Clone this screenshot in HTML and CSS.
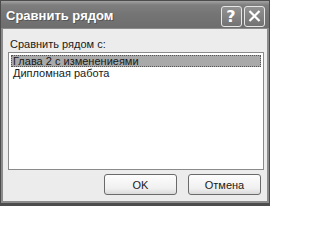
FILE: index.html
```html
<!DOCTYPE html>
<html>
<head>
<meta charset="utf-8">
<link rel="stylesheet" href="styles.css">
</head>
<body>
<div class="window">
  <div class="titlebar">
    <span class="title">Сравнить рядом</span>
    <div class="tbtns">
      <span class="tbtn">
        <svg width="20" height="20" viewBox="0 0 20 20"><text x="10" y="16" text-anchor="middle" class="qmark">?</text></svg>
      </span>
      <span class="tbtn">
        <svg width="21" height="20" viewBox="0 0 21 20"><path d="M5.5 5 L15.5 15 M15.5 5 L5.5 15" stroke="#fff" stroke-width="2.2" fill="none"/></svg>
      </span>
    </div>
  </div>
  <div class="client">
    <div class="label">Сравнить рядом с:</div>
    <div class="list">
      <div class="item sel">Глава 2 с изменениеями</div>
      <div class="item">Дипломная работа</div>
    </div>
    <div class="buttons">
      <button class="btn">OK</button>
      <button class="btn">Отмена</button>
    </div>
  </div>
</div>
</body>
</html>
```
FILE: styles.css
```css
html, body { margin: 0; padding: 0; background: #fff; }
.window {
  width: 270px; height: 206px; box-sizing: border-box;
  background: #8c8c8c;
  border: 1px solid #4c4c4c;
  border-bottom-width: 3px;
  display: flex; flex-direction: column;
  font-family: "Liberation Sans", Arial, sans-serif;
}
.titlebar {
  height: 27px; flex: none;
  background: linear-gradient(#a2a2a2 0, #7e7e7e 4px, #747474 14px, #6e6e6e 100%);
  display: flex; align-items: center; justify-content: space-between;
  padding: 0 4px 0 5px;
}
.title {
  color: #fff; font-weight: bold; font-size: 13px;
  font-family: "Liberation Sans", Arial, sans-serif;
  text-shadow: 1px 1px 0 #555;
  margin-top: 2px;
}
.tbtns { display: flex; gap: 2px; margin-top: 3px; }
.tbtn {
  display: block; width: 19px; height: 19px;
  border: 1px solid #e6e6e6; border-radius: 3px;
  background: linear-gradient(#929292, #727272);
  overflow: hidden;
}
.tbtn svg { display: block; margin: -1px 0 0 -1px; }
.qmark { fill: #fff; font-family: "DejaVu Sans", sans-serif; font-size: 16px; font-weight: bold; }
.client {
  flex: 1; background: #ececec;
  margin: 1px 2px 2px 2px;
  padding: 8px 3px 0 5px;
  display: flex; flex-direction: column;
  font-size: 11px; color: #1a1a1a;
}
.label { height: 14px; line-height: 14px; padding-left: 2px; }
.list {
  margin-top: 1px; height: 112px; background: #fff;
  border: 1px solid #8a8a8a; padding: 2px;
}
.item { height: 12px; line-height: 12px; padding-left: 2px; }
.item.sel { background: #a9a9a9; outline: 1px dotted #555; outline-offset: -1px; }
.buttons {
  display: flex; justify-content: flex-end; gap: 11px;
  margin-top: 4px; padding-right: 3px;
}
.btn {
  width: 73px; height: 21px; box-sizing: border-box;
  border: 1px solid #6a6a6a; border-radius: 3px;
  background: linear-gradient(#fdfdfd, #f0f0f0 70%, #dadada);
  font: 11px "Liberation Sans", Arial, sans-serif; color: #1a1a1a;
  padding: 0;
}
```
